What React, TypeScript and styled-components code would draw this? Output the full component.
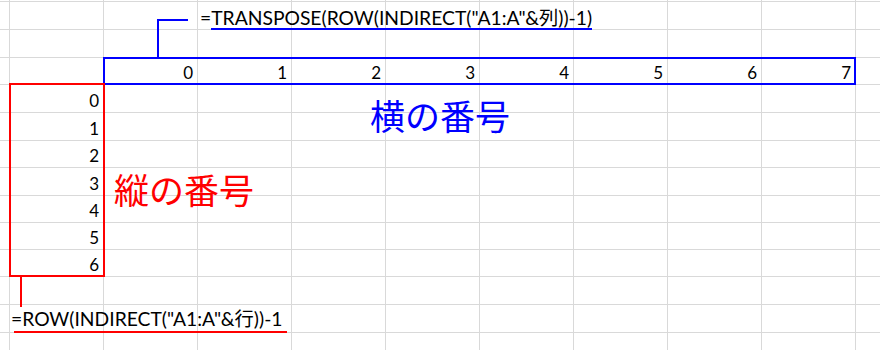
import React from "react";
import styled, { createGlobalStyle } from "styled-components";

const GRID_LINE = "#d9d9d9";
const BLUE = "#0000ff";
const RED = "#ff0000";
const LATIN = `"Lato", "Noto Sans CJK JP", sans-serif`;
const CJK = `"Noto Sans CJK JP", sans-serif`;

// row heights of the visible sheet, the last one takes what is left
const ROW_HEIGHTS = [2, 28, 28, 27, 28, 28, 27, 28, 27, 27, 27, 28, 28];
const ROW_COUNT = ROW_HEIGHTS.length + 1;
const COL_COUNT = 11;

const GlobalStyle = createGlobalStyle`
  html, body {
    margin: 0;
    padding: 0;
    background: #ffffff;
  }
`;

const Sheet = styled.div`
  display: grid;
  width: 880px;
  height: 350px;
  overflow: hidden;
  grid-template-columns: 10px repeat(9, 94px) 1fr;
  grid-template-rows: ${ROW_HEIGHTS.map((h) => `${h}px`).join(" ")} 1fr;
  font-family: ${LATIN};
  color: #000000;
`;

const Cell = styled.div<{ $row: number; $col: number }>`
  grid-row: ${(p) => p.$row};
  grid-column: ${(p) => p.$col};
  box-sizing: border-box;
  border-right: ${(p) => (p.$col < COL_COUNT ? `1px solid ${GRID_LINE}` : "none")};
  border-bottom: ${(p) => (p.$row < ROW_COUNT ? `1px solid ${GRID_LINE}` : "none")};
  display: flex;
  justify-content: flex-end;
  align-items: flex-end;
  padding: 0 4px 1px 0;
  font-size: 17px;
  line-height: 20px;
`;

const Range = styled.div<{ $color: string; $area: string; $margin: string; $layer: number }>`
  grid-area: ${(p) => p.$area};
  margin: ${(p) => p.$margin};
  border: 2px solid ${(p) => p.$color};
  z-index: ${(p) => p.$layer};
  pointer-events: none;
`;

const Callout = styled.div`
  grid-column: 3;
  grid-row: 1 / 4;
  align-self: start;
  justify-self: start;
  margin: 19px 0 0 53px;
  width: 31px;
  height: 38px;
  box-sizing: border-box;
  border-left: 2px solid ${BLUE};
  border-top: 2px solid ${BLUE};
  z-index: 1;
`;

const Leader = styled.div`
  grid-column: 2;
  grid-row: 12 / 14;
  align-self: start;
  justify-self: start;
  margin-left: 10px;
  width: 2px;
  height: 30px;
  background: ${RED};
  z-index: 2;
`;

const Formula = styled.div<{ $area: string; $indent: number; $lift: number }>`
  grid-area: ${(p) => p.$area};
  align-self: end;
  justify-self: start;
  padding-left: ${(p) => p.$indent}px;
  margin-bottom: ${(p) => p.$lift}px;
  font-size: 19.3px;
  line-height: 24px;
  white-space: nowrap;
  z-index: 3;
`;

const Underlined = styled.span<{ $color: string; $shift: number; $extra: number; $drop: number }>`
  position: relative;
  &::after {
    content: "";
    position: absolute;
    left: ${(p) => p.$shift}px;
    right: ${(p) => -p.$extra}px;
    bottom: ${(p) => -p.$drop}px;
    height: 2px;
    background: ${(p) => p.$color};
  }
`;

const Label = styled.div<{ $color: string; $area: string; $left: number; $top: number }>`
  grid-area: ${(p) => p.$area};
  align-self: start;
  justify-self: start;
  margin: ${(p) => p.$top}px 0 0 ${(p) => p.$left}px;
  color: ${(p) => p.$color};
  font-family: ${CJK};
  font-size: 35px;
  line-height: 40px;
  white-space: nowrap;
  z-index: 3;
`;

const valueAt = (row: number, col: number): string => {
  if (row === 4 && col >= 3 && col <= 10) return String(col - 3);
  if (col === 2 && row >= 5 && row <= 11) return String(row - 5);
  return "";
};

export default function App() {
  const cells = [];
  for (let r = 1; r <= ROW_COUNT; r++) {
    for (let c = 1; c <= COL_COUNT; c++) {
      cells.push(
        <Cell key={`${r}-${c}`} $row={r} $col={c}>
          {valueAt(r, c)}
        </Cell>
      );
    }
  }

  return (
    <>
      <GlobalStyle />
      <Sheet>
        {cells}
        <Range $color={BLUE} $area="4 / 3 / 5 / 11" $margin="-1px 0 0 -1px" $layer={1} />
        <Range $color={RED} $area="5 / 2 / 12 / 3" $margin="-2px -1px 0 -1px" $layer={2} />
        <Callout />
        <Leader />
        <Formula $area="1 / 4 / 3 / 10" $indent={2} $lift={0}>
          =<Underlined $color={BLUE} $shift={0} $extra={0} $drop={1}>
            TRANSPOSE(ROW(INDIRECT("A1:A"&amp;列))-1)
          </Underlined>
        </Formula>
        <Formula $area="13 / 1 / 14 / 5" $indent={11} $lift={2}>
          <Underlined $color={RED} $shift={3} $extra={4} $drop={3}>
            =ROW(INDIRECT("A1:A"&amp;行))-1
          </Underlined>
        </Formula>
        <Label $color={BLUE} $area="5 / 5 / 7 / 8" $left={78} $top={10}>
          横の番号
        </Label>
        <Label $color={RED} $area="7 / 3 / 10 / 6" $left={10} $top={28}>
          縦の番号
        </Label>
      </Sheet>
    </>
  );
}
